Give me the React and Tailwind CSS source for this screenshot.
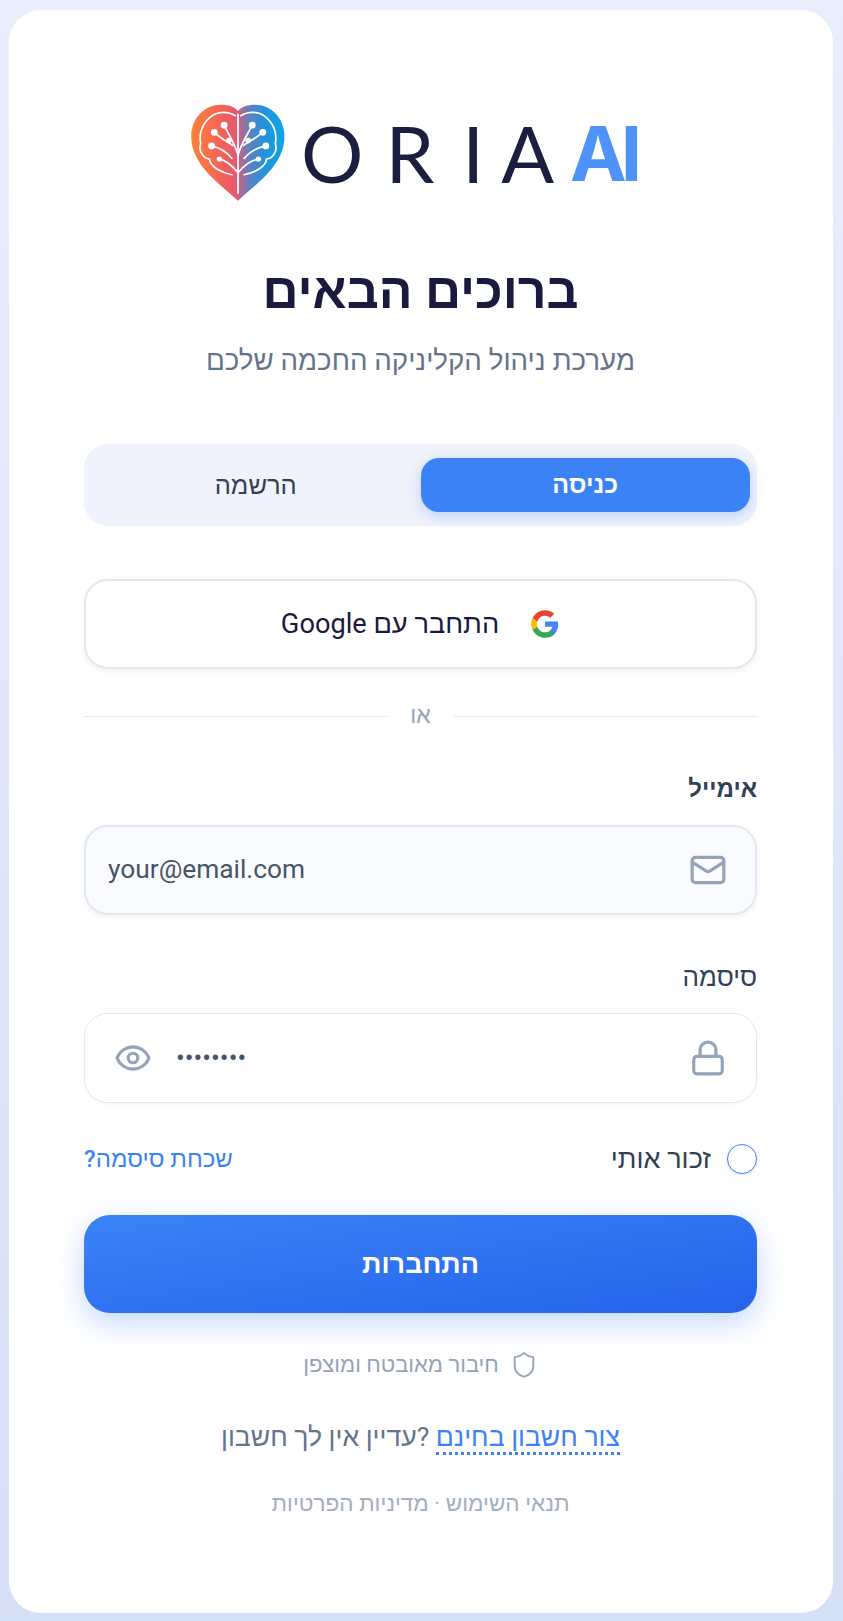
import { Mail, Lock, Eye, Shield } from 'lucide-react';

function HeartLogo() {
  return (
    <svg viewBox="0 0 330 345" className="w-[112px] h-[117px] -my-[1px] shrink-0">
      <defs>
        <linearGradient id="heartFill" x1="0" y1="0" x2="1" y2="0">
          <stop offset="0" stopColor="#ff8039" />
          <stop offset="0.42" stopColor="#ee5a62" />
          <stop offset="0.5" stopColor="#d4607c" />
          <stop offset="0.62" stopColor="#5f80c0" />
          <stop offset="0.8" stopColor="#1f95dc" />
          <stop offset="1" stopColor="#0ea5e9" />
        </linearGradient>
      </defs>
      <path
        d="M168 315C120 268 30 212 30 125C30 70 72 32 118 32C140 32 158 38 168 50C178 38 196 32 218 32C264 32 305 70 305 125C305 212 216 268 168 315Z"
        fill="url(#heartFill)"
      />
      <g fill="none" stroke="#fff" strokeWidth="5" strokeLinecap="round" strokeLinejoin="round">
        <path d="M160 64C138 50 106 50 86 68C62 88 52 118 58 146C50 168 66 190 84 192C84 214 120 232 150 238" />
        <path d="M176 64C198 50 230 50 250 68C274 88 284 118 278 146C286 168 270 190 252 192C252 214 216 232 186 238" />
        <path d="M168 60V292" />
        <path d="M168 180C160 150 146 130 127 92" />
        <path d="M152 152C136 140 116 130 98 113" />
        <path d="M168 232C150 210 132 196 113 192" />
        <path d="M150 190C134 170 112 158 90 153" />
        <path d="M168 180C176 150 190 130 210 92" />
        <path d="M184 152C200 140 222 130 240 113" />
        <path d="M168 232C186 210 206 196 228 192" />
        <path d="M186 190C202 170 226 158 250 153" />
      </g>
      <g fill="#fff">
        <circle cx="127" cy="92" r="10" />
        <circle cx="98" cy="113" r="10" />
        <circle cx="141" cy="137" r="8" />
        <circle cx="90" cy="153" r="10" />
        <circle cx="113" cy="192" r="8" />
        <circle cx="210" cy="92" r="10" />
        <circle cx="241" cy="113" r="10" />
        <circle cx="198" cy="137" r="8" />
        <circle cx="250" cy="153" r="10" />
        <circle cx="228" cy="192" r="8" />
      </g>
    </svg>
  );
}

function GoogleIcon() {
  return (
    <svg viewBox="0 0 24 24" className="w-[30px] h-[30px] shrink-0">
      <path fill="#4285F4" d="M22.56 12.25c0-.78-.07-1.53-.2-2.25H12v4.26h5.92c-.26 1.37-1.04 2.53-2.21 3.31v2.77h3.57c2.08-1.92 3.28-4.74 3.28-8.09z" />
      <path fill="#34A853" d="M12 23c2.97 0 5.46-.98 7.28-2.66l-3.57-2.77c-.98.66-2.23 1.06-3.71 1.06-2.86 0-5.29-1.93-6.16-4.53H2.18v2.84C3.99 20.53 7.7 23 12 23z" />
      <path fill="#FBBC05" d="M5.84 14.09c-.22-.66-.35-1.36-.35-2.09s.13-1.43.35-2.09V7.07H2.18C1.43 8.55 1 10.22 1 12s.43 3.45 1.18 4.93l2.85-2.22.81-.62z" />
      <path fill="#EA4335" d="M12 5.38c1.62 0 3.06.56 4.21 1.64l3.15-3.15C17.45 2.09 14.97 1 12 1 7.7 1 3.99 3.47 2.18 7.07l3.66 2.84c.87-2.6 3.3-4.53 6.16-4.53z" />
    </svg>
  );
}

export default function App() {
  return (
    <div dir="rtl" className="min-h-[1621px] bg-linear-to-b from-[#e9eefc] to-[#d5e0f7] pl-[9px] pr-[10px] pt-[10px] pb-[8px] font-['Roboto','Noto_Sans',sans-serif]">
      <div className="bg-white rounded-[32px] pl-[75px] pr-[76px] pt-[85px] h-[1603px]">
        {/* Logo */}
        <div dir="ltr" className="flex items-center justify-center h-[115px] pr-[24px]">
          <HeartLogo />
          <div className="flex items-center ml-[8px] font-['Lato',sans-serif] text-[78px] text-[#1a1f40] leading-none">
            <span className="mr-[22px]">O</span>
            <span className="mr-[28px]">R</span>
            <span className="mr-[17px]">I</span>
            <span className="mr-[16px]">A</span>
            <span className="text-[76px] font-bold font-['Inter',sans-serif] tracking-[-6px] text-[#4f93f8]">AI</span>
          </div>
        </div>

        <h1 className="mt-[53px] text-center text-[50px] leading-[56px] font-bold text-[#1a1a3e]">ברוכים הבאים</h1>
        <p className="mt-[24px] text-center text-[27.7px] leading-[36px] text-[#64748b]">מערכת ניהול הקליניקה החכמה שלכם</p>

        {/* Tabs */}
        <div className="mt-[65px] flex bg-[#f1f3fc] rounded-[24px] h-[82px] px-[7px] py-[14px]">
          <button className="flex-1 rounded-[18px] bg-[#3b82f6] text-white text-[25px] font-bold shadow-[0_4px_14px_rgba(59,130,246,0.3)]">כניסה</button>
          <button className="flex-1 rounded-[18px] text-[#334155] text-[25.5px] font-medium">הרשמה</button>
        </div>

        {/* Google */}
        <button className="mt-[53px] w-full h-[90px] flex items-center justify-center gap-[31px] bg-white border-2 border-[#e2e8f0] rounded-[24px] text-[#1a1a3e] text-[27.2px] font-normal shadow-[0_2px_6px_rgba(15,23,42,0.06)]">
          <GoogleIcon />
          <span>התחבר עם Google</span>
        </button>

        {/* Divider */}
        <div className="mt-[33px] flex items-center gap-[23px] h-[28px] text-[#94a3b8] text-[23px]">
          <div className="flex-1 h-px bg-[#e2e8f0]"></div>
          <span>או</span>
          <div className="flex-1 h-px bg-[#e2e8f0]"></div>
        </div>

        {/* Email */}
        <label className="block mt-[43px] text-[24px] leading-[32px] font-semibold text-[#334155]">אימייל</label>
        <div className="mt-[20px] h-[90px] flex items-center gap-[16px] pr-[28px] pl-[22px] bg-[#fafbff] border-2 border-[#e2e8f0] rounded-[24px] shadow-[0_2px_6px_rgba(15,23,42,0.06)]">
          <Mail size={38} strokeWidth={2} className="text-[#94a3b8] shrink-0" />
          <input dir="ltr" placeholder="your@email.com" className="flex-1 min-w-0 bg-transparent outline-none text-[26.3px] text-[#475569] placeholder:text-[#475569]" />
        </div>

        {/* Password */}
        <label className="block mt-[46px] text-[26px] leading-[32px] font-medium text-[#334155]">סיסמה</label>
        <div className="mt-[20px] h-[90px] flex items-center gap-[24px] pr-[29px] pl-[29px] bg-white border border-[#e2e8f0] rounded-[24px] shadow-[0_1px_4px_rgba(15,23,42,0.04)]">
          <Lock size={38} strokeWidth={2} className="text-[#94a3b8] shrink-0" />
          <input dir="ltr" type="password" defaultValue="12345678" className="flex-1 min-w-0 bg-transparent outline-none text-[26px] text-[#475569]" />
          <Eye size={38} strokeWidth={2} className="text-[#94a3b8] shrink-0" />
        </div>

        {/* Remember */}
        <div className="mt-[40px] h-[32px] flex items-center justify-between">
          <label className="flex items-center gap-[16px] text-[27px] font-medium text-[#334155]">
            <span className="w-[30px] h-[30px] rounded-full bg-white border border-[#3b82f6] shadow-[0_1px_3px_rgba(15,23,42,0.15)]"></span>
            זכור אותי
          </label>
          <a className="text-[24px] font-medium text-[#3b82f6]">שכחת סיסמה?</a>
        </div>

        {/* Submit */}
        <button className="mt-[40px] w-full h-[98px] rounded-[26px] bg-linear-to-br from-[#3b82f6] to-[#2563eb] text-white text-[27px] font-bold shadow-[0_10px_30px_rgba(59,130,246,0.3)]">התחברות</button>

        <div className="mt-[37px] flex items-center justify-center gap-[11px] text-[22px] leading-[30px] text-[#94a3b8]">
          <Shield size={28} strokeWidth={1.6} className="shrink-0" />
          <span>חיבור מאובטח ומוצפן</span>
        </div>

        <p className="mt-[41px] text-center text-[26.6px] leading-[32px] text-[#64748b]">
          <a className="text-[#3b82f6] font-medium border-b-[3px] border-dotted border-[#3b82f6]">צור חשבון בחינם</a> ?עדיין אין לך חשבון
        </p>

        <p className="mt-[35px] text-center text-[22.5px] leading-[30px] text-[#a3aebf]">תנאי השימוש · מדיניות הפרטיות</p>
      </div>
    </div>
  );
}
